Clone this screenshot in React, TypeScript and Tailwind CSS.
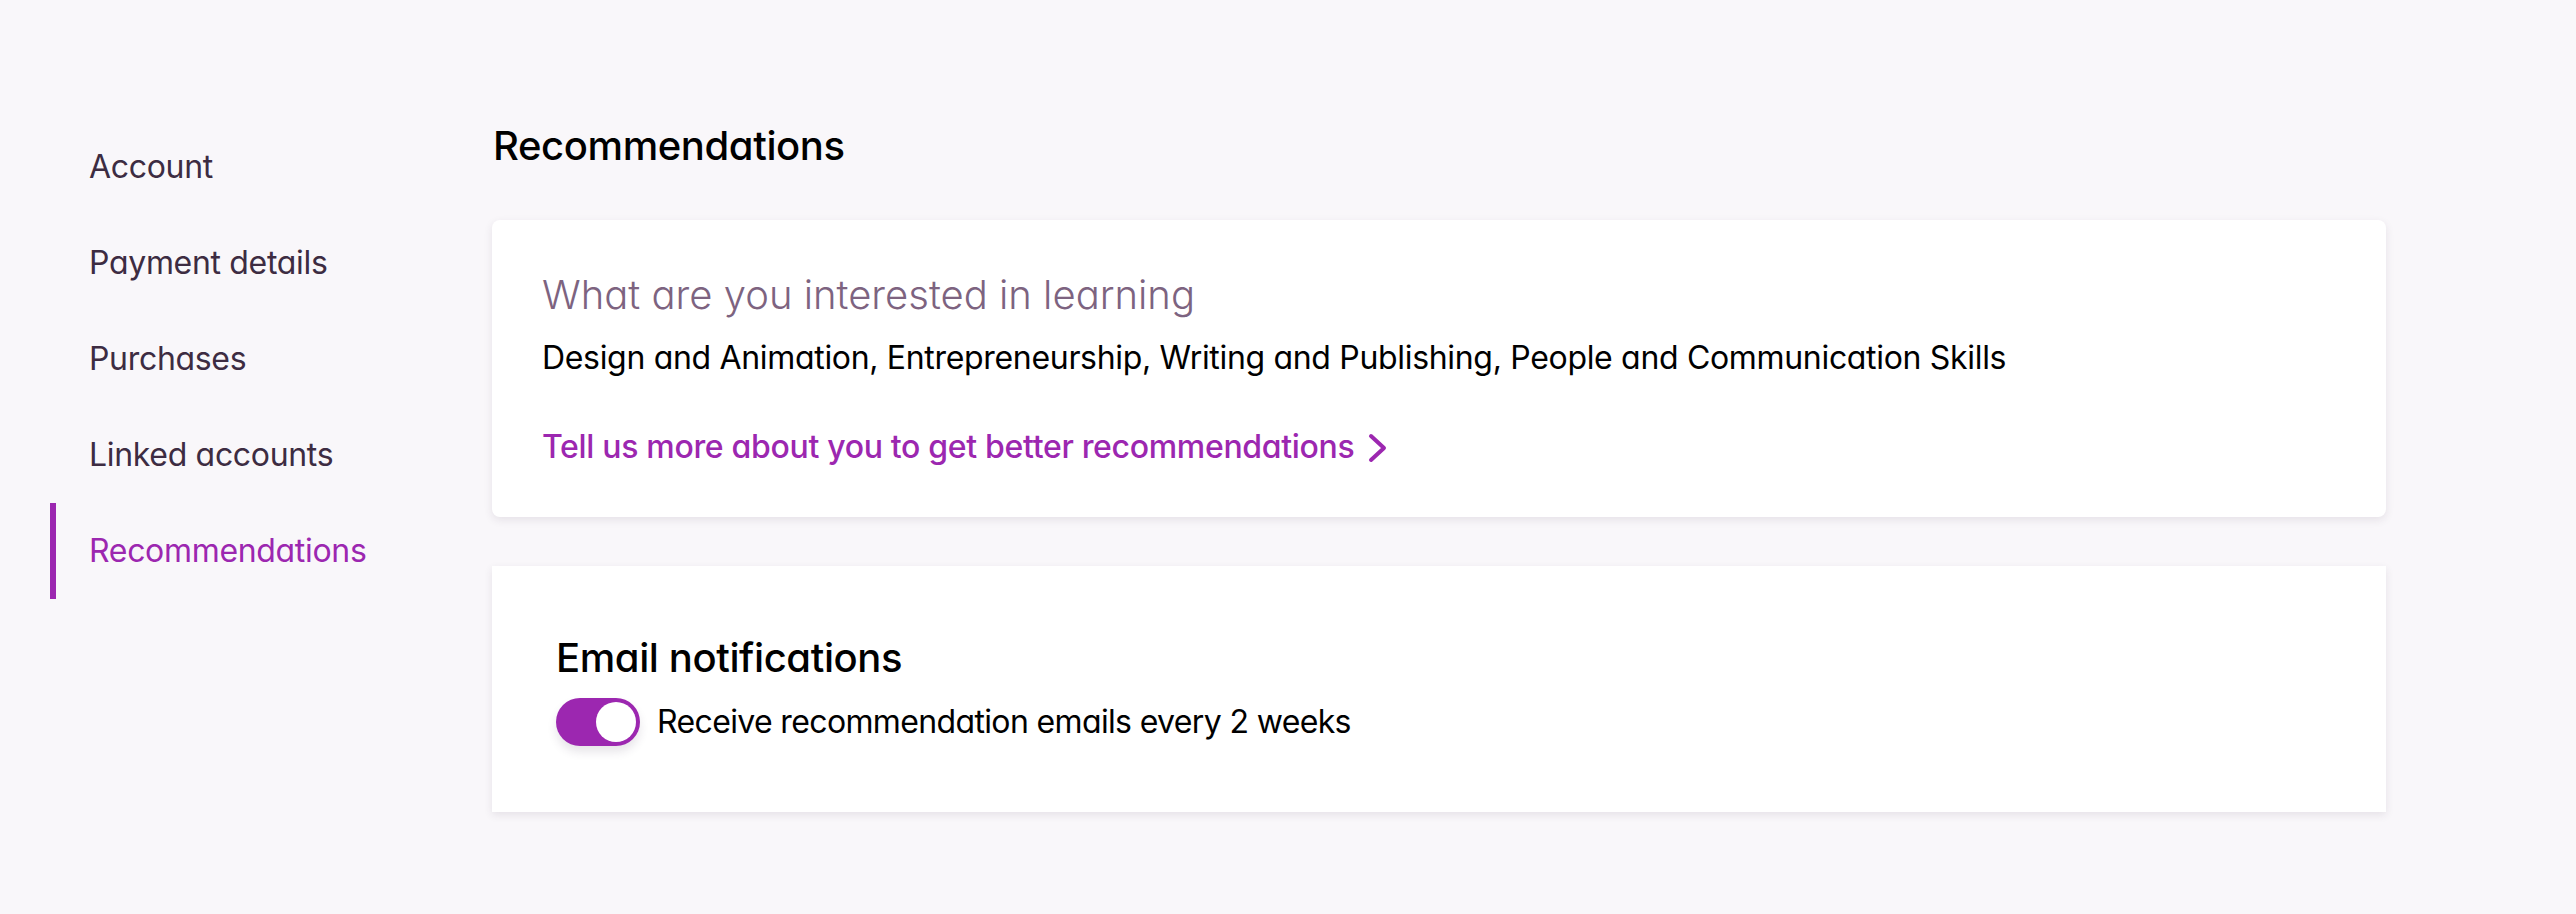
import React from "react";

const navItems = [
  "Account",
  "Payment details",
  "Purchases",
  "Linked accounts",
  "Recommendations",
];

function Chevron() {
  return (
    <svg width="20" height="30" viewBox="0 0 20 30" className="ml-[14px] mt-[2px]" fill="none">
      <path d="M3 3 L16 15 L3 27" stroke="#9c27b0" strokeWidth="4" strokeLinecap="round" strokeLinejoin="round" />
    </svg>
  );
}

export default function App() {
  const active = "Recommendations";
  return (
    <div className="min-h-[914px] w-full bg-[#f9f7fa] font-[Inter,'Noto_Sans',sans-serif] [font-feature-settings:'cv11'] text-black flex">
      <nav className="w-[492px] shrink-0 pl-[50px] pt-[119px] flex flex-col">
        {navItems.map((item) => {
          const isActive = item === active;
          return (
            <div
              key={item}
              className={
                isActive
                  ? "h-[96px] flex items-center border-l-[6px] border-[#9c27b0] pl-[33px] text-[32px] text-[#9c27b0] tracking-[-0.01em]"
                  : "h-[96px] flex items-center pl-[39px] text-[32px] text-[#3d2c42] tracking-[-0.01em]"
              }
            >
              {item}
            </div>
          );
        })}
      </nav>
      <main className="w-[1894px] shrink-0 pt-[118px] flex flex-col">
        <h1 className="text-[40px] leading-[56px] font-medium tracking-[-0.01em] pl-[1px]">Recommendations</h1>
        <section className="mt-[46px] bg-white rounded-[8px] shadow-[0_3px_8px_rgba(60,40,70,0.10)] h-[297px] pl-[50px] pt-[47px] flex flex-col">
          <h2 className="text-[40px] leading-[56px] font-light text-[#7d6380]">What are you interested in learning</h2>
          <p className="mt-[13px] text-[32px] leading-[44px] tracking-[-0.01em]">
            Design and Animation, Entrepreneurship, Writing and Publishing, People and Communication Skills
          </p>
          <a className="mt-[45px] flex items-center text-[32px] leading-[44px] font-medium text-[#9c27b0] tracking-[-0.01em]">
            <span>Tell us more about you to get better recommendations</span>
            <Chevron />
          </a>
        </section>
        <section className="mt-[49px] bg-white shadow-[0_3px_8px_rgba(60,40,70,0.10)] h-[246px] pl-[64px] pt-[64px] flex flex-col">
          <h3 className="text-[40px] leading-[56px] font-medium tracking-[-0.01em]">Email notifications</h3>
          <div className="mt-[12px] flex items-center">
            <div className="w-[84px] h-[48px] rounded-full bg-[#9c27b0] p-[4px] flex justify-end shadow-[0_6px_10px_rgba(60,40,70,0.12)]">
              <div className="w-[40px] h-[40px] rounded-full bg-white" />
            </div>
            <span className="ml-[17px] text-[32px] leading-[44px] tracking-[-0.02em]">Receive recommendation emails every 2 weeks</span>
          </div>
        </section>
      </main>
    </div>
  );
}
